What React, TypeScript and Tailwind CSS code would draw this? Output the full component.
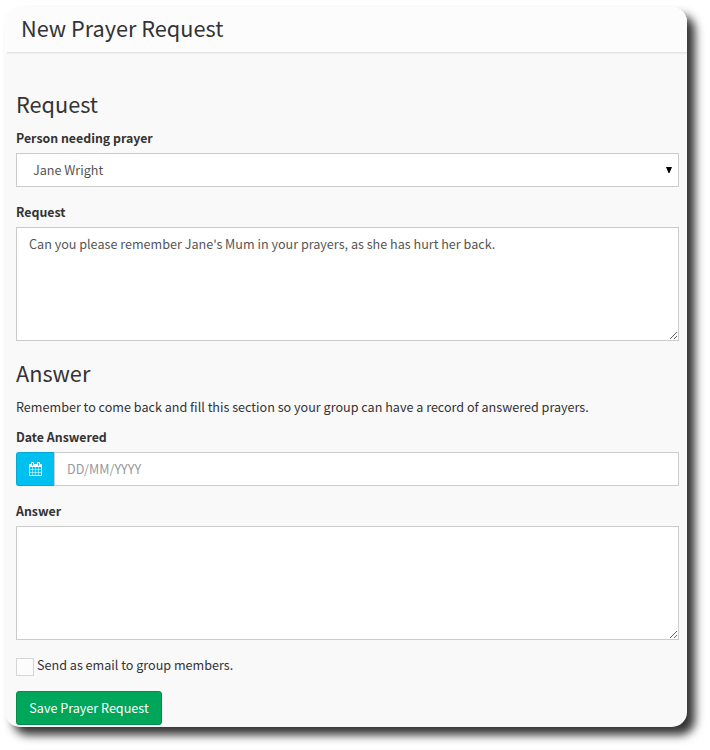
import React from "react";

function Heading({ children }: { children: React.ReactNode }) {
  return <h3 className="text-[21.7px] leading-[26px] font-normal whitespace-nowrap">{children}</h3>;
}

function Label({ children }: { children: React.ReactNode }) {
  return <label className="block text-[12.35px] leading-5 font-bold whitespace-nowrap">{children}</label>;
}

function CalendarIcon() {
  return (
    <svg viewBox="0 0 1664 1792" className="h-[14px] w-[13px] fill-white">
      <path d="M128 1664h288v-288h-288v288zM480 1664h320v-288h-320v288zM128 1312h288v-320h-288v320zM480 1312h320v-320h-320v320zM128 928h288v-288h-288v288zM864 1664h320v-288h-320v288zM480 928h320v-288h-320v288zM1248 1664h288v-288h-288v288zM864 1312h320v-320h-320v320zM512 448v-288q0-13-9.5-22.5t-22.5-9.5h-64q-13 0-22.5 9.5t-9.5 22.5v288q0 13 9.5 22.5t22.5 9.5h64q13 0 22.5-9.5t9.5-22.5zM1248 1312h288v-320h-288v320zM864 928h320v-288h-320v288zM1248 928h288v-288h-288v288zM1280 448v-288q0-13-9.5-22.5t-22.5-9.5h-64q-13 0-22.5 9.5t-9.5 22.5v288q0 13 9.5 22.5t22.5 9.5h64q13 0 22.5-9.5t9.5-22.5zM1664 384v1280q0 52-38 90t-90 38h-1408q-52 0-90-38t-38-90v-1280q0-52 38-90t90-38h128v-96q0-66 47-113t113-47h64q66 0 113 47t47 113v96h384v-96q0-66 47-113t113-47h64q66 0 113 47t47 113v96h128q52 0 90 38t38 90z" />
    </svg>
  );
}

const area =
  "mt-[5px] block h-[114px] w-full resize-y border border-[#ccc] bg-white px-3 py-1.5 text-[12.6px] leading-5 text-[#555] outline-none";

export default function App() {
  return (
    <div className="h-[750px] w-[710px] overflow-hidden bg-white pt-[7px] pl-[5px] font-['Noto_Sans_CJK_SC',sans-serif] text-[12.6px] leading-5 text-[#333]">
      <main className="h-[720px] w-[682px] overflow-hidden rounded-[15px] bg-[#f9f9f9] shadow-[8px_8px_10px_rgba(0,0,0,0.8)]">
        <div className="bg-[#fdfdfd] pl-[2px]">
          <header className="h-[46px] border-b border-[#e4e4e4] bg-[#fcfcfc] pt-[8px] pl-[14px] shadow-[0_1px_1px_rgba(0,0,0,0.04)]">
            <h2 className="text-[21.7px] leading-[26px] whitespace-nowrap">New Prayer Request</h2>
          </header>
        </div>
        <form className="flex flex-col pt-[38px] pr-2 pl-[11px]">
          <Heading>Request</Heading>
          <div className="mt-[11px]">
            <Label>Person needing prayer</Label>
            <div className="mt-[5px] flex h-[34px] items-center justify-between border border-[#ccc] bg-white pr-[6px] pl-4 text-[#555]">
              <span>Jane Wright</span>
              <svg viewBox="0 0 6 6" className="h-[6px] w-[6px] fill-black">
                <path d="M0 0h6L3.5 6h-1z" />
              </svg>
            </div>
          </div>
          <div className="mt-[15px]">
            <Label>Request</Label>
            <textarea className={area} spellCheck={false} defaultValue="Can you please remember Jane's Mum in your prayers, as she has hurt her back." />
          </div>
          <div className="mt-[19px]">
            <Heading>Answer</Heading>
          </div>
          <p className="mt-[11px] whitespace-nowrap">
            Remember to come back and fill this section so your group can have a record of answered prayers.
          </p>
          <div className="mt-[10px]">
            <Label>Date Answered</Label>
            <div className="mt-[5px] flex h-[34px]">
              <span className="flex w-[38px] items-center justify-center rounded-l-[3px] border border-r-0 border-[#00acd6] bg-[#00c0ef]">
                <CalendarIcon />
              </span>
              <input
                className="min-w-0 flex-1 border border-[#ccc] bg-white px-3 placeholder:text-[#999] outline-none"
                placeholder="DD/MM/YYYY"
              />
            </div>
          </div>
          <div className="mt-[15px]">
            <Label>Answer</Label>
            <textarea className={area} />
          </div>
          <label className="mt-[15px] flex h-[21px] items-start">
            <span className="mt-[3px] h-[18px] w-[18px] border border-[#d5d5d5] bg-[#fcfcfc]" />
            <span className="ml-[3px] whitespace-nowrap">Send as email to group members.</span>
          </label>
          <button
            type="button"
            className="mt-[15px] h-[34px] w-[146px] rounded-[3px] border border-[#008d4c] bg-[#00a65a] text-center whitespace-nowrap text-white"
          >
            Save Prayer Request
          </button>
        </form>
      </main>
    </div>
  );
}
